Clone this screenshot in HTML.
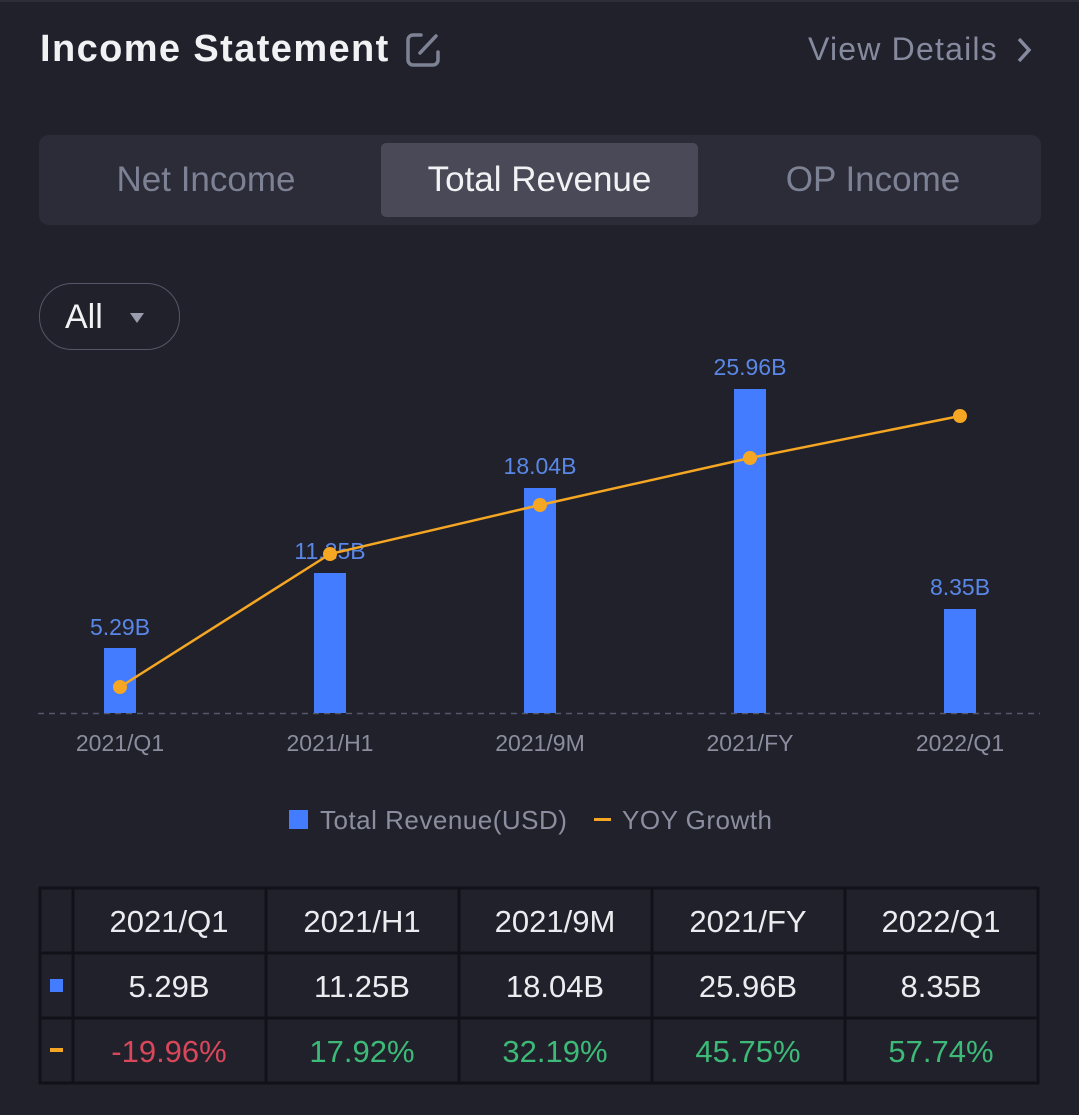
<!DOCTYPE html>
<html><head><meta charset="utf-8"><style>
body{margin:0;width:1079px;height:1115px;background:#20212b;font-family:"Liberation Sans",sans-serif;overflow:hidden;position:relative}
.a{position:absolute;white-space:nowrap}
</style></head><body>
<div class="a" style="left:0;top:0;width:1079px;height:2px;background:#2c2e3a"></div>
<div class="a" style="left:40px;top:28px;font-size:38px;font-weight:bold;color:#f2f2f5;letter-spacing:1.4px">Income Statement</div>
<svg class="a" style="left:404px;top:31px" width="38" height="38" viewBox="0 0 38 38"><path d="M17 4H9a5 5 0 0 0-5 5v20a5 5 0 0 0 5 5h20a5 5 0 0 0 5-5v-8" fill="none" stroke="#7e8295" stroke-width="3.5" stroke-linecap="round"/><path d="M16 22L32 5" stroke="#7e8295" stroke-width="3.5" stroke-linecap="round"/></svg>
<div class="a" style="left:808px;top:31px;font-size:32px;color:#858a9e;letter-spacing:1.2px">View Details</div>
<svg class="a" style="left:1015px;top:36px" width="18" height="28"><path d="M4 3l10 11-10 11" fill="none" stroke="#858a9e" stroke-width="3.5"/></svg>
<div class="a" style="left:39px;top:135px;width:1002px;height:90px;background:#2b2c38;border-radius:10px"></div>
<div class="a" style="left:381px;top:143px;width:317px;height:74px;background:#4a4957;border-radius:5px"></div>
<div class="a" style="left:39px;top:160px;width:334px;text-align:center;font-size:35px;color:#7d8194">Net Income</div>
<div class="a" style="left:381px;top:160px;width:317px;text-align:center;font-size:35px;color:#f2f2f5">Total Revenue</div>
<div class="a" style="left:706px;top:160px;width:334px;text-align:center;font-size:35px;color:#7d8194">OP Income</div>
<div class="a" style="left:39px;top:283px;width:139px;height:65px;border:1.5px solid #545768;border-radius:33px"></div>
<div class="a" style="left:65px;top:298px;font-size:34px;color:#f2f2f5">All</div>
<svg class="a" style="left:129px;top:312px" width="16" height="12"><path d="M1 1h14L8 11z" fill="#9a9dad"/></svg>
<svg class="a" style="left:0;top:340px" width="1079" height="500">
<line x1="38" y1="373.5" x2="1040" y2="373.5" stroke="#55586a" stroke-width="1.5" stroke-dasharray="6,5"/>
<g fill="#447cff">
<rect x="104" y="308" width="32" height="65"/>
<rect x="314" y="233" width="32" height="140"/>
<rect x="524" y="148" width="32" height="225"/>
<rect x="734" y="49" width="32" height="324"/>
<rect x="944" y="269" width="32" height="104"/>
</g>
<g fill="#5a87e6" font-size="23" text-anchor="middle" font-family="Liberation Sans">
<text x="120" y="295">5.29B</text><text x="330" y="219">11.25B</text><text x="540" y="134">18.04B</text><text x="750" y="35">25.96B</text><text x="960" y="255">8.35B</text>
</g>
<polyline points="120,347 330,214 540,165 750,118 960,76" fill="none" stroke="#f5a623" stroke-width="2.5"/>
<g fill="#f5a623"><circle cx="120" cy="347" r="7"/><circle cx="330" cy="214" r="7"/><circle cx="540" cy="165" r="7"/><circle cx="750" cy="118" r="7"/><circle cx="960" cy="76" r="7"/></g>
<g fill="#8b8e9e" font-size="23" text-anchor="middle" font-family="Liberation Sans">
<text x="120" y="411">2021/Q1</text><text x="330" y="411">2021/H1</text><text x="540" y="411">2021/9M</text><text x="750" y="411">2021/FY</text><text x="960" y="411">2022/Q1</text>
</g>
<rect x="289" y="470" width="19" height="19" fill="#447cff"/>
<text x="320" y="489" fill="#8b8e9e" font-size="26" font-family="Liberation Sans" letter-spacing="0.5">Total Revenue(USD)</text>
<rect x="594" y="478" width="17" height="3" fill="#f5a623"/>
<text x="622" y="489" fill="#8b8e9e" font-size="26" font-family="Liberation Sans" letter-spacing="0.5">YOY Growth</text>
</svg>
<svg class="a" style="left:0;top:880px" width="1079" height="220">
<g stroke="#111219" stroke-width="3" fill="none">
<rect x="40" y="8" width="998" height="195"/>
<line x1="40" y1="73" x2="1038" y2="73"/><line x1="40" y1="138" x2="1038" y2="138"/>
<line x1="73" y1="8" x2="73" y2="203"/><line x1="266" y1="8" x2="266" y2="203"/><line x1="459" y1="8" x2="459" y2="203"/><line x1="652" y1="8" x2="652" y2="203"/><line x1="845" y1="8" x2="845" y2="203"/>
</g>
<rect x="50" y="99" width="13" height="13" fill="#447cff"/>
<rect x="50" y="168" width="13" height="4" fill="#f5a623"/>
<g font-size="31" text-anchor="middle" font-family="Liberation Sans">
<g fill="#ececf0">
<text x="169" y="52">2021/Q1</text><text x="362" y="52">2021/H1</text><text x="555" y="52">2021/9M</text><text x="748" y="52">2021/FY</text><text x="941" y="52">2022/Q1</text>
<text x="169" y="117">5.29B</text><text x="362" y="117">11.25B</text><text x="555" y="117">18.04B</text><text x="748" y="117">25.96B</text><text x="941" y="117">8.35B</text>
</g>
<text x="169" y="182" fill="#d9475a">-19.96%</text>
<g fill="#3dba78"><text x="362" y="182">17.92%</text><text x="555" y="182">32.19%</text><text x="748" y="182">45.75%</text><text x="941" y="182">57.74%</text></g>
</g>
</svg>
</body></html>
